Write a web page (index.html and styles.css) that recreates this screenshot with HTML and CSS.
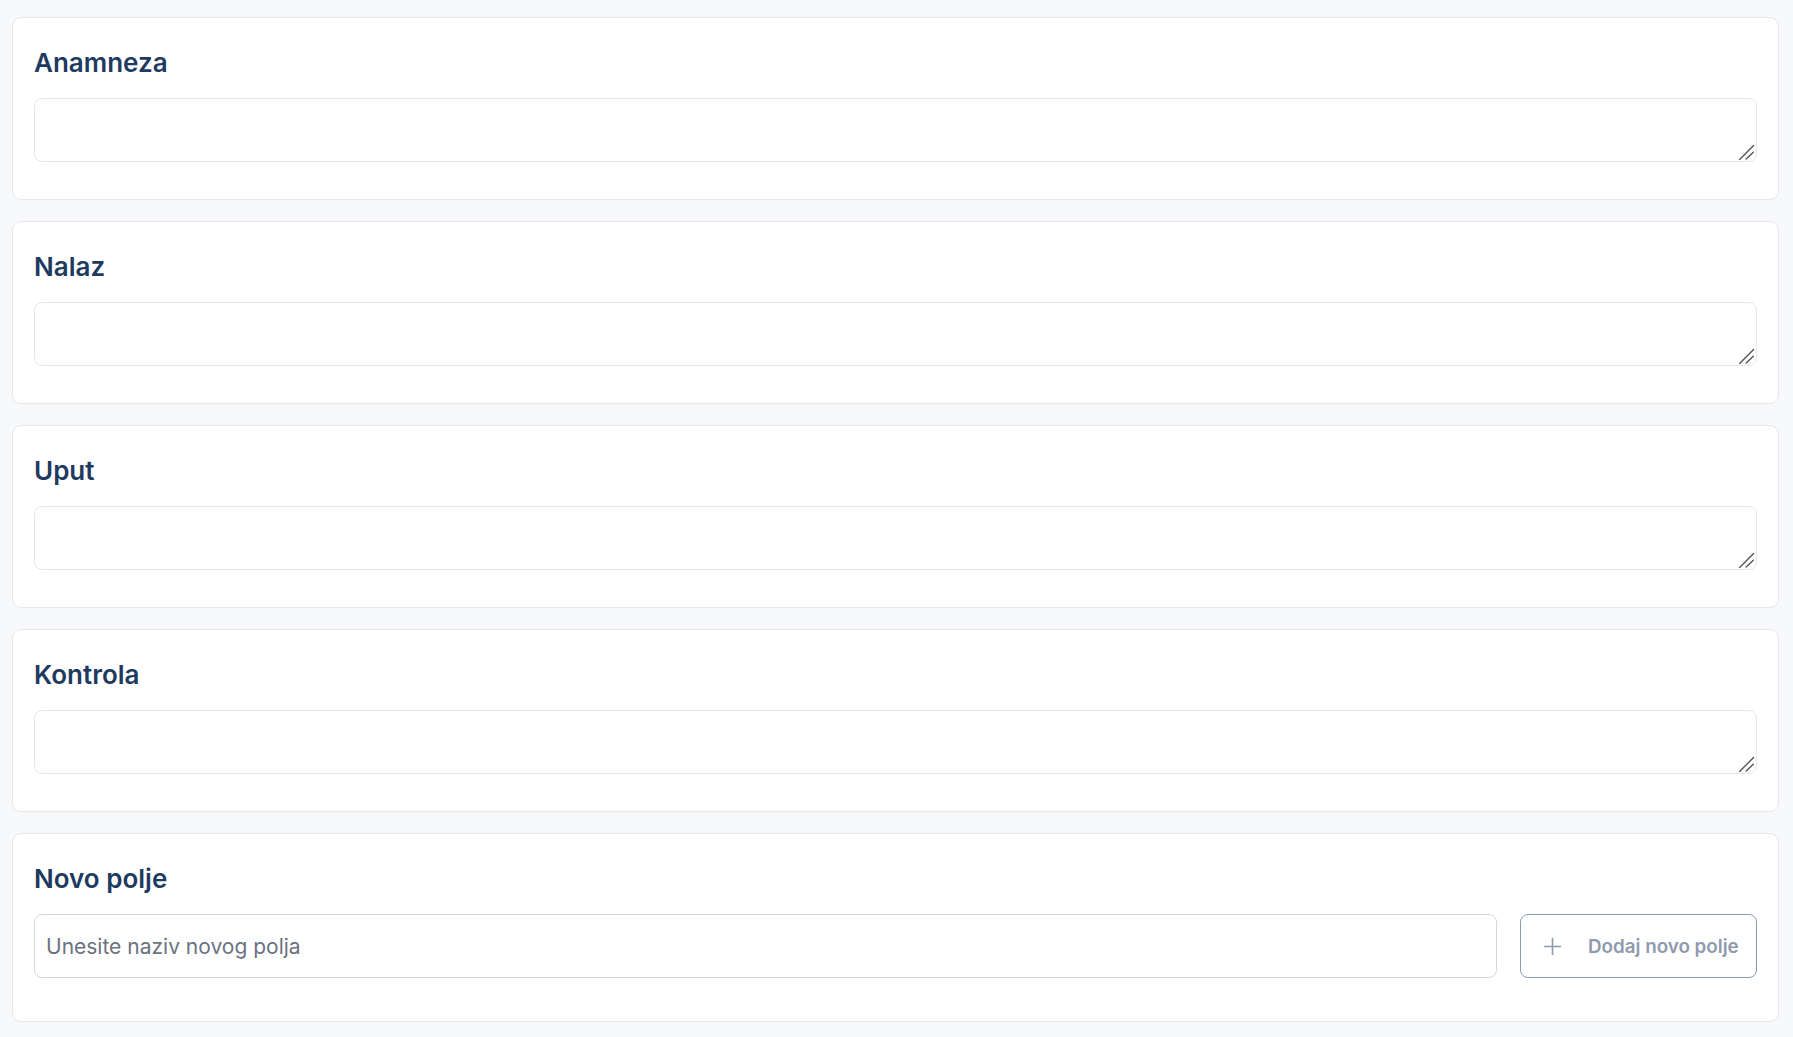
FILE: index.html
```html
<!DOCTYPE html>
<html lang="hr">
<head>
<meta charset="utf-8">
<title>Polja</title>
<link rel="stylesheet" href="styles.css">
</head>
<body>
<main class="page">
  <section class="card">
    <h2 class="card-title">Anamneza</h2>
    <textarea class="field-area"></textarea>
  </section>
  <section class="card">
    <h2 class="card-title">Nalaz</h2>
    <textarea class="field-area"></textarea>
  </section>
  <section class="card">
    <h2 class="card-title">Uput</h2>
    <textarea class="field-area"></textarea>
  </section>
  <section class="card">
    <h2 class="card-title">Kontrola</h2>
    <textarea class="field-area"></textarea>
  </section>
  <section class="card">
    <h2 class="card-title">Novo polje</h2>
    <div class="new-row">
      <input class="new-input" type="text" placeholder="Unesite naziv novog polja">
      <button class="add-btn" type="button" disabled>
        <svg class="add-icon" width="19" height="19" viewBox="0 0 19 19" fill="none" stroke="currentColor" stroke-width="1.6" stroke-linecap="round"><path d="M9.5 1.5v16M1.5 9.5h16"/></svg>
        <span class="add-label">Dodaj novo polje</span>
      </button>
    </div>
  </section>
</main>
</body>
</html>
```
FILE: styles.css
```css
html, body {
  margin: 0;
  background: #f8f9fb;
}
body {
  font-family: Inter, "Noto Sans", sans-serif;
}
.page {
  display: flex;
  flex-direction: column;
  gap: 21px;
  padding: 17px 14px 16px 12px;
}
.card {
  background: #ffffff;
  border: 1px solid #e5e7eb;
  border-radius: 9px;
  padding: 24px 21px 21px;
}
.card-title {
  margin: 0 0 15px;
  font-size: 26px;
  line-height: 41px;
  font-weight: 600;
  color: #1e3a5f;
}
.field-area {
  display: block;
  box-sizing: border-box;
  width: 100%;
  height: 64px;
  margin: 0 0 16px;
  padding: 10px 12px;
  border: 1px solid #e5e7eb;
  border-radius: 8px;
  background-color: #ffffff;
  background-image: url("data:image/svg+xml,%3Csvg xmlns='http://www.w3.org/2000/svg' width='16' height='16' viewBox='0 0 16 16'%3E%3Cpath d='M0.6 15.4L14.6 1.4M7.2 15L14.3 8.2' stroke='%23555' stroke-width='1.4' fill='none' stroke-linecap='round'/%3E%3C/svg%3E");
  background-repeat: no-repeat;
  background-position: right 1px bottom 1px;
  font-family: inherit;
  font-size: 18.3px;
  resize: none;
  outline: none;
}
.new-row {
  display: flex;
  gap: 23px;
  margin-bottom: 22px;
}
.new-input {
  flex: 1;
  min-width: 0;
  box-sizing: border-box;
  height: 64px;
  padding: 0 11px;
  border: 1px solid #d4d6dd;
  border-radius: 8px;
  font-family: inherit;
  font-size: 21px;
  color: #374151;
  outline: none;
}
.new-input::placeholder {
  color: #6b7280;
}
.add-btn {
  flex: none;
  box-sizing: border-box;
  width: 237px;
  height: 64px;
  display: flex;
  align-items: center;
  gap: 26px;
  padding: 0 0 0 22px;
  border: 1px solid #8e9aad;
  border-radius: 8px;
  background: #ffffff;
  color: #8e9aad;
  font-family: inherit;
  font-size: 18.8px;
  font-weight: 600;
  white-space: nowrap;
}
.add-icon {
  flex: none;
}
.add-label {
  white-space: nowrap;
}
```
